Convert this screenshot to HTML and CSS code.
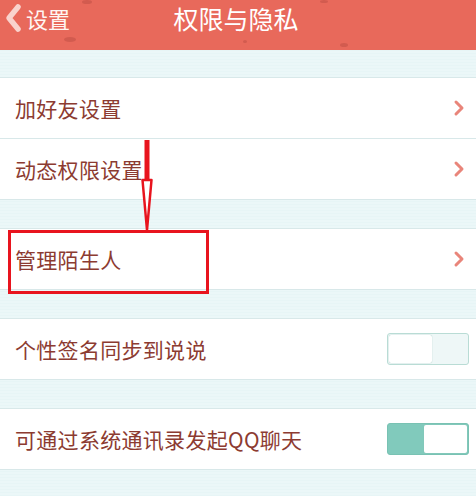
FILE: index.html
```
<!DOCTYPE html>
<html>
<head>
<meta charset="utf-8">
<link rel="stylesheet" href="styles.css">
</head>
<body>
<div class="page">
  <div class="header">
    <div class="back">
      <svg class="back-icon" width="20" height="30" viewBox="0 0 20 30"><path d="M15 4 L6 15 L15 26" fill="none" stroke="#f9d3cd" stroke-width="5.5" stroke-linecap="round" stroke-linejoin="round"/></svg>
      <span>设置</span>
    </div>
    <div class="title">权限与隐私</div>
    <span class="dot d1"></span><span class="dot d2"></span><span class="dot d3"></span><span class="dot d4"></span><span class="dot d5"></span>
  </div>
  <div class="band first"></div>
  <div class="row"><span class="label">加好友设置</span><svg class="chev" width="12" height="18" viewBox="0 0 12 18"><path d="M3 3 L9 9 L3 15" fill="none" stroke="#e9857a" stroke-width="3" stroke-linecap="round" stroke-linejoin="round"/></svg></div>
  <div class="row"><span class="label">动态权限设置</span><svg class="chev" width="12" height="18" viewBox="0 0 12 18"><path d="M3 3 L9 9 L3 15" fill="none" stroke="#e9857a" stroke-width="3" stroke-linecap="round" stroke-linejoin="round"/></svg></div>
  <div class="band"></div>
  <div class="row"><span class="label">管理陌生人</span><svg class="chev" width="12" height="18" viewBox="0 0 12 18"><path d="M3 3 L9 9 L3 15" fill="none" stroke="#e9857a" stroke-width="3" stroke-linecap="round" stroke-linejoin="round"/></svg></div>
  <div class="band"></div>
  <div class="row"><span class="label">个性签名同步到说说</span><div class="toggle off"><div class="knob"></div></div></div>
  <div class="band"></div>
  <div class="row"><span class="label">可通过系统通讯录发起QQ聊天</span><div class="toggle on"><div class="knob"></div></div></div>
  <div class="band"></div>

  <div class="redbox"></div>
  <svg class="arrow" width="16" height="92" viewBox="0 0 16 92">
    <rect x="5.5" y="0" width="5" height="40" fill="#e8141e"/>
    <path d="M3.5 40 L12.5 40 L8 90 Z" fill="#ffffff" stroke="#e8141e" stroke-width="2.5" stroke-linejoin="round"/>
  </svg>
</div>
</body>
</html>
```
FILE: styles.css
```
html, body {
  margin: 0;
  padding: 0;
}
body {
  font-family: "Noto Sans CJK SC", "Noto Sans", sans-serif;
  background: #ebf7f8;
}
.page {
  position: relative;
  width: 476px;
  height: 496px;
  overflow: hidden;
  background: #ebf7f8;
}
.header {
  position: relative;
  height: 50px;
  background: #e8695b;
  display: flex;
  align-items: flex-start;
}
.back {
  display: flex;
  align-items: center;
  padding-left: 3px;
  height: 36px;
  color: #fff6f3;
  font-size: 22px;
}
.back-icon {
  margin-right: 3px;
}
.title {
  position: absolute;
  left: 0;
  right: 0;
  top: 0;
  height: 36px;
  line-height: 36px;
  text-align: center;
  color: #ffffff;
  font-size: 25px;
  padding-right: 4px;
}
.dot {
  position: absolute;
  border-radius: 50%;
  background: #c9554a;
  opacity: 0.7;
}
.d1 { left: 82px; top: 0px; width: 10px; height: 4px; }
.d2 { left: 64px; top: 37px; width: 12px; height: 5px; }
.d3 { left: 243px; top: 40px; width: 4px; height: 3px; }
.d4 { left: 340px; top: 43px; width: 8px; height: 4px; }
.d5 { left: 320px; top: 0px; width: 8px; height: 3px; }
.band {
  height: 28px;
  border-bottom: 1px solid #d8e8e9;
  background: repeating-linear-gradient(0deg, #ebf7f8 0px, #ebf7f8 2px, #e7f5f6 2px, #e7f5f6 3px);
}
.band.first {
  height: 27px;
}
.row {
  height: 60px;
  border-bottom: 1px solid #d8e8e9;
  background: #ffffff;
  display: flex;
  align-items: center;
  justify-content: space-between;
  padding: 0 7px 0 15px;
}
.label {
  font-size: 21px;
  color: #8c3b31;
  letter-spacing: 0.3px;
}
.chev {
  margin-right: 4px;
}
.toggle {
  width: 80px;
  height: 30px;
  border: 1px solid #b9dcd5;
  border-radius: 3px;
  display: flex;
  box-sizing: content-box;
}
.toggle .knob {
  width: 43px;
  height: 28px;
  margin: 1px;
  background: #ffffff;
  border-radius: 2px;
  box-shadow: 0 0 1px #8fb8b0;
}
.toggle.off {
  background: #eef7f7;
  justify-content: flex-start;
}
.toggle.on {
  background: #81cabc;
  border-color: #79c2b3;
  justify-content: flex-end;
}
.redbox {
  position: absolute;
  left: 8px;
  top: 230px;
  width: 195px;
  height: 58px;
  border: 3px solid #e8141e;
}
.arrow {
  position: absolute;
  left: 139px;
  top: 140px;
}
```
